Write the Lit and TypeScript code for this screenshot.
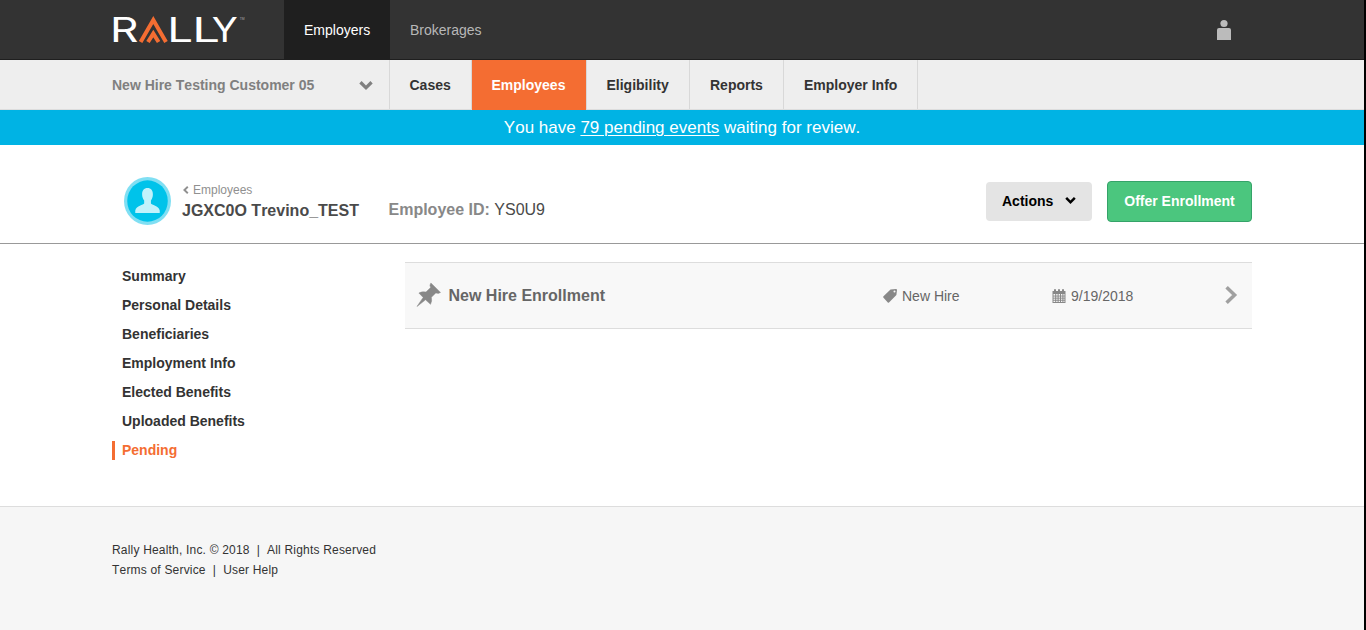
import { LitElement, html, css, svg } from "lit";
import { customElement, state } from "lit/decorators.js";
import { classMap } from "lit/directives/class-map.js";

const chevron = html`<svg viewBox="0 0 14 9" aria-hidden="true"><path d="M0.3 2.4 2.6 0.1 7 4.4 11.4 0.1 13.7 2.4 7 9Z" fill="currentColor"/></svg>`;

const logo = html`<svg class="logo" viewBox="0 0 136 30" role="img" aria-label="Rally">
  <g fill="#fff" font-family="Inter, sans-serif" font-size="34.4" font-weight="400">
    <text x="-1.9" y="27" textLength="28.5" lengthAdjust="spacingAndGlyphs">R</text>
    <text x="55.2" y="27" textLength="25.8" lengthAdjust="spacingAndGlyphs">L</text>
    <text x="80.2" y="27" textLength="27.8" lengthAdjust="spacingAndGlyphs">L</text>
    <text x="99.8" y="27" textLength="26" lengthAdjust="spacingAndGlyphs">Y</text>
  </g>
  <g fill="none" stroke="#f46d32" stroke-width="4">
    <path d="M28.6 27 41.3 5 54 27"/>
    <path d="M36 27 41.3 18.6 46.6 27"/>
  </g>
  <text x="127.8" y="5" fill="#aaa" font-family="Liberation Sans, sans-serif" font-size="3.4">TM</text>
</svg>`;

@customElement("app-root")
export class AppRoot extends LitElement {
  @state() private tab = "Employees";
  @state() private section = "Pending";

  private tabs = ["Cases", "Employees", "Eligibility", "Reports", "Employer Info"];
  private sections = ["Summary", "Personal Details", "Beneficiaries", "Employment Info", "Elected Benefits", "Uploaded Benefits", "Pending"];

  static styles = css`
    :host {
      display: block;
      box-sizing: border-box;
      height: 630px;
      overflow: hidden;
      border-right: 2px solid #000;
      background: #fff;
      color: #333;
      font: 14px/20px "Liberation Sans", Arial, sans-serif;
      font-kerning: none;
    }
    * { box-sizing: border-box; }
    svg { display: block; flex: none; overflow: visible; }
    .wrap { width: 1140px; margin-left: 112px; display: flex; }
    .top { height: 60px; background: #333; border-bottom: 1px solid #1f1f1f; }
    .top .wrap { height: 59px; }
    .brand { width: 172px; padding-top: 15px; }
    .logo { width: 136px; height: 30px; }
    .area { padding: 20px 20px 0; color: #b8b8b8; }
    .area.on { background: #1f1f1f; color: #fff; width: 106px; }
    .user { margin: 20px 21px 0 auto; width: 14px; height: 20px; fill: #bbb; }
    .nav { height: 50px; background: #eee; border-bottom: 1px solid #ddd; }
    .nav .wrap { height: 50px; font-weight: bold; }
    .customer { width: 278px; height: 49px; padding: 1px 16px 0 0; color: #808080; border-right: 1px solid #d8d8d8; display: flex; justify-content: space-between; align-items: center; }
    .customer svg { width: 14px; height: 9px; }
    .tab { height: 49px; line-height: 50px; padding: 0 20px; border-right: 1px solid #d8d8d8; white-space: nowrap; }
    .tab.cases { width: 82px; padding-left: 19.5px; }
    .tab.employees { width: 115px; padding-left: 19.5px; }
    .tab.eligibility { width: 103px; padding-left: 19.5px; }
    .tab.reports { width: 94px; }
    .tab.employer { width: 134px; }
    .tab.on { height: 50px; background: #f46d32; background-clip: padding-box; color: #fff; }
    .banner { height: 35px; line-height: 35px; background: #00b3e4; color: #fff; font-size: 17px; text-align: center; }
    .banner a { text-decoration: underline; text-decoration-thickness: 1px; text-underline-offset: 2px; }
    .head { height: 99px; border-bottom: 1px solid #999; }
    .avatar { width: 47px; height: 48px; margin: 32px 11px 0 12px; }
    .person { padding-top: 36px; width: 206.5px; }
    .back { display: flex; align-items: center; gap: 4px; font-size: 12px; line-height: 18px; height: 18px; color: #909090; }
    .back svg { width: 6px; height: 8px; margin-left: 1px; }
    .name { font-size: 16px; line-height: 24px; font-weight: bold; color: #4a4a4a; white-space: nowrap; }
    .eid { padding-top: 55px; font-size: 16px; color: #4a4a4a; white-space: nowrap; }
    .eid b { color: #888; }
    .buttons { display: flex; gap: 15px; margin: 36px 0 0 auto; align-items: flex-start; font-weight: bold; }
    .actions { display: flex; align-items: center; gap: 12px; height: 39px; width: 106px; margin-top: 1px; padding: 0 16px 1px; border-radius: 4px; background: #e4e4e4; color: #000; }
    .actions svg { width: 11px; height: 7px; margin-bottom: 1px; }
    .offer { width: 145px; height: 41px; line-height: 39px; text-align: center; border: 1px solid #35a369; border-radius: 4px; background: #4bc67e; color: #fff; }
    .main { height: 262px; }
    .side { width: 293px; padding-top: 23px; display: flex; flex-direction: column; gap: 10px; font-weight: bold; }
    .side a { height: 19px; line-height: 19px; padding-left: 7px; border-left: 3px solid transparent; }
    .side a.on { border-color: #f46d32; color: #f46d32; }
    .event { display: flex; align-items: center; width: 847px; height: 67px; margin-top: 18px; padding: 0 15px 0 12px; border-top: 1px solid #ddd; border-bottom: 1px solid #ddd; background: #f8f8f8; color: #666; }
    .title { display: flex; align-items: center; gap: 8px; width: 466px; font-size: 16px; font-weight: bold; }
    .pin { width: 23.5px; height: 23.5px; margin-top: -1px; fill: #888; }
    .meta { display: flex; align-items: center; gap: 5px; padding-top: 1px; }
    .meta.kind { width: 169px; }
    .meta svg { width: 14px; height: 14px; fill: #888; }
    .go { width: 12px; height: 18px; margin: -1px 0 0 auto; }
    .foot { height: 124px; border-top: 1px solid #ddd; background: #f6f6f6; padding: 33px 0 0 112px; font-size: 12px; letter-spacing: 0.19px; white-space: pre; }
  `;

  render() {
    return html`
      <header class="top">
        <div class="wrap">
          <div class="brand">${logo}</div>
          <a class="area on">Employers</a>
          <a class="area">Brokerages</a>
          <svg class="user" viewBox="0 0 14 20"><circle cx="7" cy="3.5" r="3.6"/><path d="M0 20V10Q0 8 2 8H12Q14 8 14 10V20Z"/></svg>
        </div>
      </header>
      <nav class="nav">
        <div class="wrap">
          <div class="customer"><span>New Hire Testing Customer 05</span>${chevron}</div>
          ${this.tabs.map((t) => html`<a class=${classMap({ tab: true, on: t === this.tab, [t.split(" ")[0].toLowerCase()]: true })} @click=${() => (this.tab = t)}>${t}</a>`)}
        </div>
      </nav>
      <div class="banner">You have <a>79 pending events</a> waiting for review.</div>
      <section class="head">
        <div class="wrap">
          <svg class="avatar" viewBox="0 0 48 48" preserveAspectRatio="none">
            <circle cx="24" cy="24" r="24" fill="#80dff3"/><circle cx="24" cy="24" r="20.7" fill="#00c3ea"/>
            <path d="M24 11C27.6 11 29.6 13.6 29.5 17.5 29.5 20 28.6 22 27.5 23.4V26.5C28 28.2 35.4 28.2 36.5 33.5V36H11.5V33.5C12.6 28.2 20 28.2 20.6 26.5V23.4C19.4 22 18.5 20 18.5 17.5 18.4 13.6 20.4 11 24 11Z" fill="#c2f2fb"/>
          </svg>
          <div class="person">
            <a class="back"><svg viewBox="0 0 6 8"><path d="M4.8 .7 1.4 4 4.8 7.3" fill="none" stroke="currentColor" stroke-width="1.9"/></svg>Employees</a>
            <div class="name">JGXC0O Trevino_TEST</div>
          </div>
          <div class="eid"><b>Employee ID:</b> YS0U9</div>
          <div class="buttons">
            <a class="actions">Actions ${chevron}</a>
            <a class="offer">Offer Enrollment</a>
          </div>
        </div>
      </section>
      <main class="main">
        <div class="wrap">
          <nav class="side">
            ${this.sections.map((s) => html`<a class=${classMap({ on: s === this.section })} @click=${() => (this.section = s)}>${s}</a>`)}
          </nav>
          <a class="event">
            <span class="title">
              <svg class="pin" viewBox="0 0 24 24"><path d="M14.2 0 24 9.6 21.8 10.6 19.2 10.1 14.7 14.6Q15.6 18.5 13.8 21.8L8.7 17.2 0 24 6.3 14.7 1.9 10.2Q5.2 8.3 9.2 9.2L13.9 4.7 13.2 2.2Z" stroke="#888" stroke-width=".5"/></svg>
              New Hire Enrollment
            </span>
            <span class="meta kind">
              <svg viewBox="0 0 14 14"><path fill-rule="evenodd" d="M7.5 .5 13 0Q14 0 14 1L13.4 6 6 13.6Q5.4 14 4.8 13.4L.3 8.4Q-.1 7.8 .5 7.2ZM11.5 1.5A1 1 0 1 0 11.5 3.5 1 1 0 1 0 11.5 1.5Z"/></svg>
              New Hire
            </span>
            <span class="meta">
              <svg viewBox="0 0 14 14">
                <path fill-rule="evenodd" d="M.5 2H2V.2H4V2H6V.2H8V2H10V.2H12V2H13.5V14H.5ZM1.5 5V13H12.5V5Z"/>
                ${[3.7, 6.1, 8.5, 10.9].map((x) => svg`<rect x=${x - 0.5} y="5" width="1" height="8"/>`)}
                ${[6.6, 8.7, 10.8].map((y) => svg`<rect x="1" y=${y} width="12" height=".9"/>`)}
              </svg>
              9/19/2018
            </span>
            <svg class="go" viewBox="0 0 12 18"><path d="M1.6 1.3 9.6 9 1.6 16.7" fill="none" stroke="#a0a0a0" stroke-width="3.5"/></svg>
          </a>
        </div>
      </main>
      <footer class="foot"><div>Rally Health, Inc. © 2018  |  All Rights Reserved</div><div>Terms of Service  |  User Help</div></footer>
    `;
  }
}
